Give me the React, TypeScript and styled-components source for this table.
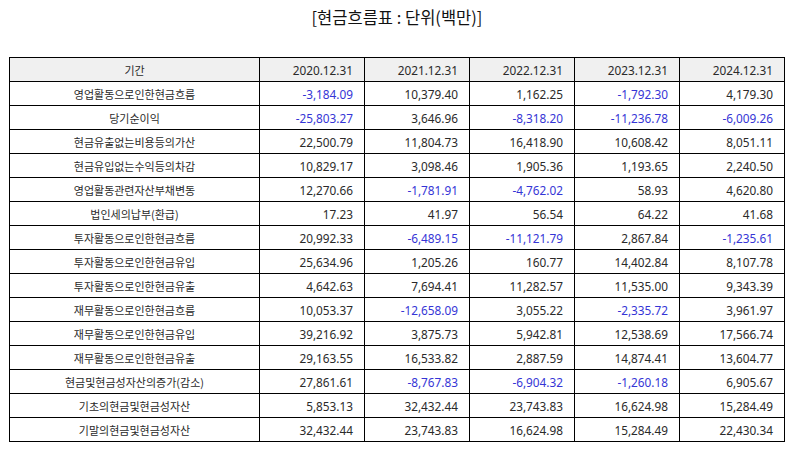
import styled, { createGlobalStyle } from 'styled-components'

const GlobalStyle = createGlobalStyle`
  html, body {
    margin: 0;
    padding: 0;
    background: #ffffff;
  }
  body {
    font-family: "Noto Sans CJK KR", "Noto Sans", sans-serif;
    color: #222;
  }
`

const Page = styled.div`
  width: 794px;
  height: 452px;
  box-sizing: border-box;
  padding: 5px 10px 0 10px;
  display: flex;
  flex-direction: column;
  align-items: center;
`

const Title = styled.h1`
  margin: 0;
  height: 52px;
  font-size: 16.5px;
  font-weight: 400;
  line-height: 24px;
  color: #111;
`

const Table = styled.table`
  border-collapse: collapse;
  table-layout: fixed;
  width: 775px;
  font-size: 11px;
`

const Cell = styled.td<{ $label?: boolean; $negative?: boolean }>`
  border: 1px solid #000;
  height: 23px;
  padding: 0 11px;
  line-height: 14px;
  text-align: ${(p) => (p.$label ? 'center' : 'right')};
  font-family: ${(p) => (p.$label ? '"Noto Sans CJK KR", sans-serif' : '"Noto Sans", "Noto Sans CJK KR", sans-serif')};
  font-size: ${(p) => (p.$label ? '11px' : '11.8px')};
  color: ${(p) => (p.$negative ? '#3535d6' : '#2a2a2a')};
  white-space: nowrap;
`

const HeadCell = styled.th<{ $label?: boolean }>`
  border: 1px solid #000;
  height: 23px;
  padding: 0 11px;
  font-weight: 400;
  background: #f0f0f0;
  text-align: ${(p) => (p.$label ? 'center' : 'right')};
  font-family: ${(p) => (p.$label ? '"Noto Sans CJK KR", sans-serif' : '"Noto Sans", "Noto Sans CJK KR", sans-serif')};
  font-size: ${(p) => (p.$label ? '11px' : '11.8px')};
  color: #2a2a2a;
`

const years = ['2020.12.31', '2021.12.31', '2022.12.31', '2023.12.31', '2024.12.31']

const rows: [string, string[]][] = [
  ['영업활동으로인한현금흐름', ['-3,184.09', '10,379.40', '1,162.25', '-1,792.30', '4,179.30']],
  ['당기순이익', ['-25,803.27', '3,646.96', '-8,318.20', '-11,236.78', '-6,009.26']],
  ['현금유출없는비용등의가산', ['22,500.79', '11,804.73', '16,418.90', '10,608.42', '8,051.11']],
  ['현금유입없는수익등의차감', ['10,829.17', '3,098.46', '1,905.36', '1,193.65', '2,240.50']],
  ['영업활동관련자산부채변동', ['12,270.66', '-1,781.91', '-4,762.02', '58.93', '4,620.80']],
  ['법인세의납부(환급)', ['17.23', '41.97', '56.54', '64.22', '41.68']],
  ['투자활동으로인한현금흐름', ['20,992.33', '-6,489.15', '-11,121.79', '2,867.84', '-1,235.61']],
  ['투자활동으로인한현금유입', ['25,634.96', '1,205.26', '160.77', '14,402.84', '8,107.78']],
  ['투자활동으로인한현금유출', ['4,642.63', '7,694.41', '11,282.57', '11,535.00', '9,343.39']],
  ['재무활동으로인한현금흐름', ['10,053.37', '-12,658.09', '3,055.22', '-2,335.72', '3,961.97']],
  ['재무활동으로인한현금유입', ['39,216.92', '3,875.73', '5,942.81', '12,538.69', '17,566.74']],
  ['재무활동으로인한현금유출', ['29,163.55', '16,533.82', '2,887.59', '14,874.41', '13,604.77']],
  ['현금및현금성자산의증가(감소)', ['27,861.61', '-8,767.83', '-6,904.32', '-1,260.18', '6,905.67']],
  ['기초의현금및현금성자산', ['5,853.13', '32,432.44', '23,743.83', '16,624.98', '15,284.49']],
  ['기말의현금및현금성자산', ['32,432.44', '23,743.83', '16,624.98', '15,284.49', '22,430.34']],
]

export default function App() {
  return (
    <Page>
      <GlobalStyle />
      <Title>[현금흐름표 : 단위(백만)]</Title>
      <Table>
        <colgroup>
          <col style={{ width: 250 }} />
          {years.map((y) => (
            <col key={y} style={{ width: 105 }} />
          ))}
        </colgroup>
        <thead>
          <tr>
            <HeadCell $label>기간</HeadCell>
            {years.map((y) => (
              <HeadCell key={y}>{y}</HeadCell>
            ))}
          </tr>
        </thead>
        <tbody>
          {rows.map(([label, values]) => (
            <tr key={label}>
              <Cell $label>{label}</Cell>
              {values.map((v, i) => (
                <Cell key={i} $negative={v.startsWith('-')}>
                  {v}
                </Cell>
              ))}
            </tr>
          ))}
        </tbody>
      </Table>
    </Page>
  )
}
